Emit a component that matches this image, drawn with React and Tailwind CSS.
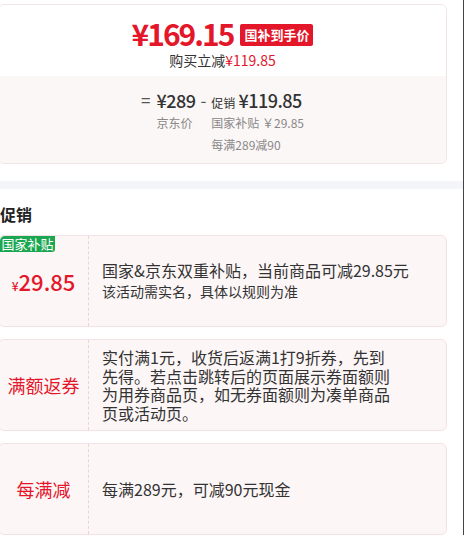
import React from 'react';

const RED = 'text-[#e3162a]';

const PromoCard = ({ left, children, tag }) => (
  <div className="relative -ml-[2px] w-[449px] h-[92px] flex rounded-[6px] border border-[#f3e2e5] bg-[#fdf6f7]">
    {tag && (
      <span className="absolute left-[1px] top-0 h-[16px] w-[55px] flex items-center justify-center rounded-tl-[5px] rounded-br-[3px] bg-[#1ba651] text-[13px] leading-[16px] text-white">
        {tag}
      </span>
    )}
    <div className="w-[90px] shrink-0 flex items-center justify-center border-r border-dashed border-[#ebd3d8]">
      {left}
    </div>
    <div className="flex-1 flex items-center pl-[13px] text-[#333]">{children}</div>
  </div>
);

export default function App() {
  return (
    <div className="w-[464px] h-[535px] overflow-hidden bg-white border-r border-[#444] font-['Noto_Sans_CJK_SC',sans-serif] pt-[4px]">
      {/* price summary */}
      <div className="-ml-[2px] w-[449px] rounded-[6px] border border-[#f1e4e6] overflow-hidden">
        <div className="h-[71px] flex flex-col items-center pt-[11px] bg-white">
          <div className="flex items-center h-[34px]">
            <span className={`${RED} text-[30px] leading-[34px] font-bold tracking-[-2px]`}>¥169.15</span>
            <span className="ml-[7px] mt-[3px] h-[22px] px-[4px] flex items-center rounded-[2px] bg-[#e3162a] text-white text-[13px] leading-[22px] font-bold">
              国补到手价
            </span>
          </div>
          <div className="h-[20px] text-[14px] leading-[20px] text-[#333]">
            购买立减<span className={RED}>¥119.85</span>
          </div>
        </div>
        <div className="h-[87px] flex justify-center pt-[12px] bg-[#fcf7f7] text-[#333]">
          <span className="text-[17px] leading-[24px] mr-[6px] text-[#555]">=</span>
          <div className="flex flex-col">
            <span className="text-[18px] leading-[24px] font-medium tracking-[-0.5px]">¥289</span>
            <span className="text-[12px] leading-[22px] text-[#888]">京东价</span>
          </div>
          <span className="text-[17px] leading-[24px] mx-[5px] text-[#555]">-</span>
          <div className="flex flex-col">
            <span className="h-[24px] leading-[24px]">
              <span className="text-[12px] mr-[3px]">促销</span>
              <span className="text-[18px] font-medium tracking-[-0.5px]">¥119.85</span>
            </span>
            <span className="text-[12px] leading-[22px] text-[#888]">国家补贴 ￥29.85</span>
            <span className="text-[12px] leading-[22px] text-[#888]">每满289减90</span>
          </div>
        </div>
      </div>

      <div className="mt-[17px] h-[8px] w-full bg-[#f4f5f9]" />

      <h3 className="mt-[15px] mb-[11px] text-[16px] leading-[20px] font-bold text-[#222]">促销</h3>

      <div className="flex flex-col gap-[12px]">
        <PromoCard
          tag="国家补贴"
          left={
            <span className={`${RED} font-medium`}>
              <span className="text-[12px]">¥</span>
              <span className="text-[22px]">29.85</span>
            </span>
          }
        >
          <div>
            <div className="text-[16px] leading-[21px]">国家&amp;京东双重补贴，当前商品可减29.85元</div>
            <div className="text-[14px] leading-[21px]">该活动需实名，具体以规则为准</div>
          </div>
        </PromoCard>

        <PromoCard left={<span className={`${RED} text-[18px]`}>满额返券</span>}>
          <div className="w-[292px] text-[16px] leading-[18.5px]">
            实付满1元，收货后返满1打9折券，先到先得。若点击跳转后的页面展示券面额则为用券商品页，如无券面额则为凑单商品页或活动页。
          </div>
        </PromoCard>

        <PromoCard left={<span className={`${RED} text-[18px]`}>每满减</span>}>
          <div className="text-[16px]">每满289元，可减90元现金</div>
        </PromoCard>
      </div>
    </div>
  );
}
